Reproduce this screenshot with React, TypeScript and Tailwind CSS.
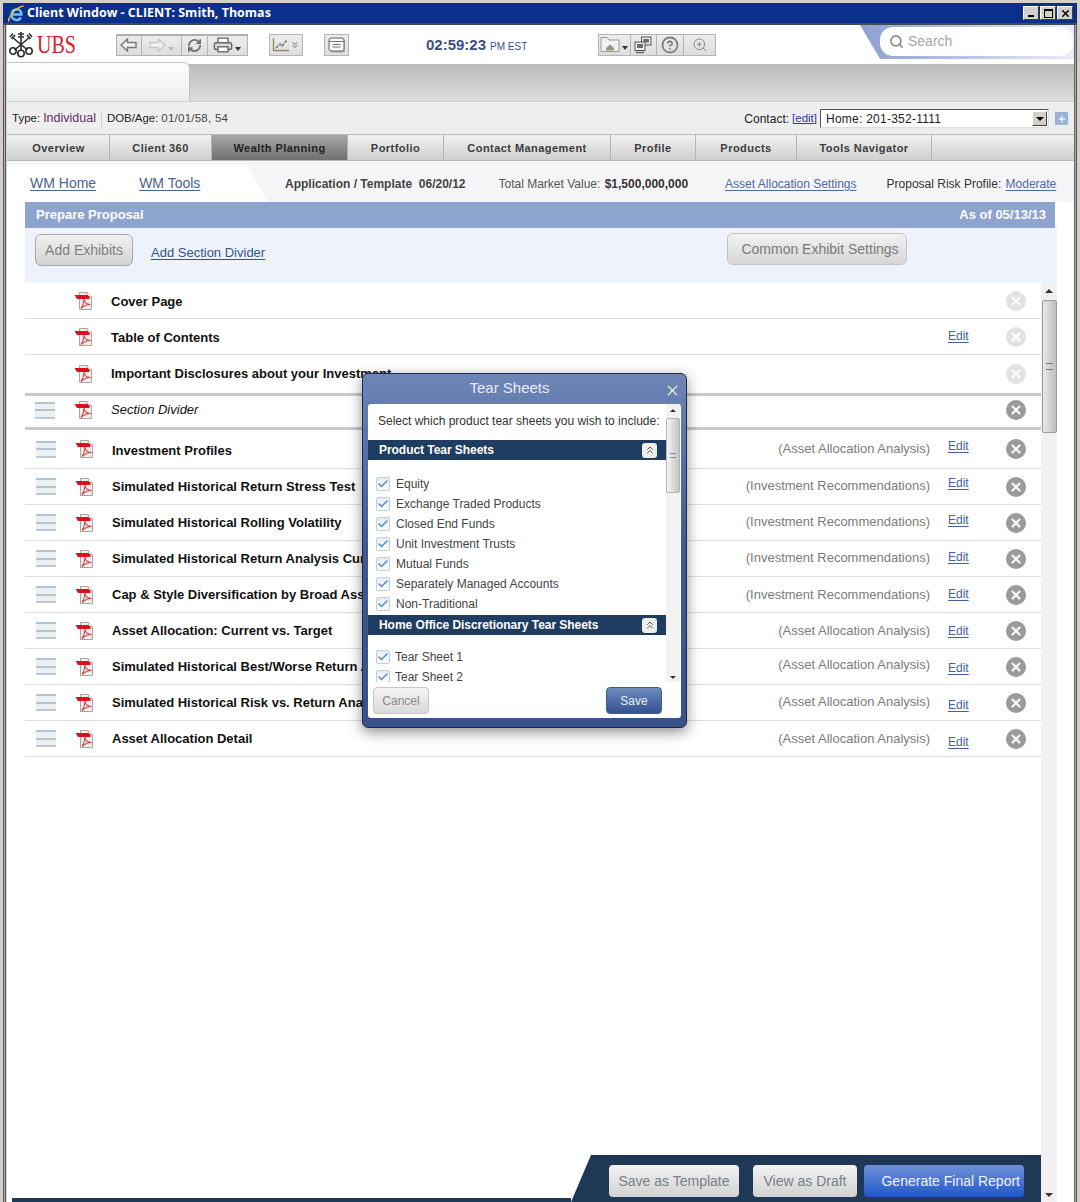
import { RefreshCw, Search, Plus, ChevronsUp, Check, X, ChevronsDown, HelpCircle, ZoomIn } from 'lucide-react'

const arial = 'font-["Liberation_Sans",Arial,sans-serif]'

const tabs = [
  { label: 'Overview', w: 'w-[102px]' },
  { label: 'Client 360', w: 'w-[102px]' },
  { label: 'Wealth Planning', w: 'w-[136px]', active: true },
  { label: 'Portfolio', w: 'w-[96px]' },
  { label: 'Contact Management', w: 'w-[167px]' },
  { label: 'Profile', w: 'w-[85px]' },
  { label: 'Products', w: 'w-[101px]' },
  { label: 'Tools Navigator', w: 'w-[135px]' },
]

type RowData = {
  name: string
  note?: string
  edit?: boolean
  drag?: boolean
  faded?: boolean
  italic?: boolean
  h: string
  thick?: boolean
  nameNudge?: string
  noteNudge?: string
  editNudge?: string
}

const rows: RowData[] = [
  { name: 'Cover Page', faded: true, h: 'h-[36px]', nameNudge: 'pt-[2px]' },
  { name: 'Table of Contents', edit: true, faded: true, h: 'h-[36px]', nameNudge: 'pt-[2px]', editNudge: 'pb-[2px]' },
  { name: 'Important Disclosures about your Investment', faded: true, h: 'h-[41px]', thick: true },
  { name: 'Section Divider', drag: true, italic: true, h: 'h-[34px] pb-[3px]', thick: true },
  { name: 'Investment Profiles', note: '(Asset Allocation Analysis)', edit: true, drag: true, h: 'h-[39px]', nameNudge: 'pt-[4px]', editNudge: 'pb-[6px]' },
  { name: 'Simulated Historical Return Stress Test', note: '(Investment Recommendations)', edit: true, drag: true, h: 'h-[36px]', noteNudge: 'pb-[2px]', editNudge: 'pb-[8px]' },
  { name: 'Simulated Historical Rolling Volatility', note: '(Investment Recommendations)', edit: true, drag: true, h: 'h-[36px]', noteNudge: 'pb-[2px]', editNudge: 'pb-[6px]' },
  { name: 'Simulated Historical Return Analysis Current vs. Target', note: '(Investment Recommendations)', edit: true, drag: true, h: 'h-[36px]', noteNudge: 'pb-[2px]', editNudge: 'pb-[4px]' },
  { name: 'Cap & Style Diversification by Broad Asset Class', note: '(Investment Recommendations)', edit: true, drag: true, h: 'h-[36px]', editNudge: 'pb-[2px]' },
  { name: 'Asset Allocation: Current vs. Target', note: '(Asset Allocation Analysis)', edit: true, drag: true, h: 'h-[36px]' },
  { name: 'Simulated Historical Best/Worse Return Analysis', note: '(Asset Allocation Analysis)', edit: true, drag: true, h: 'h-[36px]', noteNudge: 'pb-[4px]', editNudge: 'pt-[2px]' },
  { name: 'Simulated Historical Risk vs. Return Analysis', note: '(Asset Allocation Analysis)', edit: true, drag: true, h: 'h-[36px]', noteNudge: 'pb-[2px]', editNudge: 'pt-[4px]' },
  { name: 'Asset Allocation Detail', note: '(Asset Allocation Analysis)', edit: true, drag: true, h: 'h-[36px]', editNudge: 'pt-[6px]' },
]

function PdfIcon() {
  return (
    <svg width="20" height="20" viewBox="0 0 20 20" className="shrink-0">
      <path d="M5.500 1.500h8l4 4v13h-12z" fill="#efecea" stroke="#aaa5a2" />
      <path d="M13.500 1.500v4h4" fill="#fff" stroke="#bdb8b5" />
      <path d="M0.500 4h13l2 1.500v2.500H3z" fill="#d8111a" />
      <path d="M7 17.500c2-3 3-6 3-9.500 0 3 2 5 6.500 5.500-4 0-7 1.500-9.500 4z" fill="none" stroke="#d0484d" strokeWidth="1.100" />
    </svg>
  )
}

function DragHandle() {
  return (
    <div className="flex h-[17px] w-[20px] flex-col justify-between bg-[#edf0f3]">
      <div className="h-[2px] bg-[#b4c3d2]" />
      <div className="h-[2px] bg-[#b4c3d2]" />
      <div className="h-[2px] bg-[#bccad8]" />
    </div>
  )
}

function CloseDot({ faded }: { faded?: boolean }) {
  return (
    <div className={`flex size-[20px] items-center justify-center rounded-full ${faded ? 'bg-[#e2e2e2]' : 'bg-[#9a9a9a]'}`}>
      <X size={14} strokeWidth={3.4} className="text-white" />
    </div>
  )
}

function ExhibitRow({ row }: { row: RowData }) {
  return (
    <div className={`flex shrink-0 items-center ${row.h} ${row.thick ? 'border-b-[3px] border-[#c9c9c9]' : 'border-b border-[#dcdcdc]'}`}>
      <div className={`flex ${row.note ? 'w-[50px] pl-[11px]' : 'w-[49px] pl-[10px]'}`}>{row.drag && <DragHandle />}</div>
      <PdfIcon />
      <div className={`ml-[17px] w-[340px] whitespace-nowrap text-[13px] text-[#111] ${row.italic ? 'italic' : 'font-bold'} ${row.nameNudge ?? ''}`}>
        {row.name}
      </div>
      <div className={`flex-1 whitespace-nowrap pr-[18px] text-right text-[13px] text-[#7b7b7b] ${row.noteNudge ?? ''}`}>{row.note}</div>
      <div className={`w-[48px] text-[12px] ${row.editNudge ?? ''}`}>
        {row.edit && <span className="text-[#44609f] underline underline-offset-2">Edit</span>}
      </div>
      <div className="flex w-[45px] justify-start pl-[10px]">
        <CloseDot faded={row.faded} />
      </div>
    </div>
  )
}

function ToolBtn({ w, children }: { w: string; children: React.ReactNode }) {
  return (
    <div className={`flex h-full items-center justify-center gap-[2px] border-r border-[#b5b5b5] last:border-r-0 bg-gradient-to-b from-[#ececec] to-[#dedede] ${w}`}>
      {children}
    </div>
  )
}

function Caret({ light }: { light?: boolean }) {
  return <div className={`mt-[7px] h-0 w-0 border-x-[3.5px] border-t-[4px] border-x-transparent ${light ? 'border-t-[#bbb]' : 'border-t-[#333]'}`} />
}

function BlockArrow({ dir, color }: { dir: 'left' | 'right'; color: string }) {
  return (
    <svg width="17" height="14" viewBox="0 0 17 14" className={dir === 'right' ? 'scale-x-[-1]' : ''}>
      <path d="M1 7l6.500-6v3.500H16v5H7.500V13z" fill="#f0f0f0" stroke={color} strokeWidth="1.400" />
    </svg>
  )
}

function PrintIcon() {
  return (
    <svg width="20" height="18" viewBox="0 0 22 18">
      <path d="M5.500 7V1.500h11V7" fill="#fff" stroke="#666" strokeWidth="1.500" />
      <rect x="1.500" y="6.500" width="19" height="7.500" rx="2" fill="#d8d8d8" stroke="#666" strokeWidth="1.500" />
      <rect x="5.500" y="11" width="11" height="5.500" fill="#fff" stroke="#666" strokeWidth="1.500" />
    </svg>
  )
}

function ChartIcon() {
  return (
    <svg width="18" height="15" viewBox="0 0 18 15">
      <path d="M1.500 1v12.500H17" fill="none" stroke="#8a8a6a" strokeWidth="1.300" />
      <path d="M4 11l4-4 2 2 5-6" fill="none" stroke="#777" strokeWidth="1.600" strokeDasharray="3 1.200" />
    </svg>
  )
}

function WindowIcon() {
  return (
    <svg width="18" height="16" viewBox="0 0 18 16">
      <rect x="2" y="2.500" width="15" height="13" rx="2" fill="#aaa" />
      <rect x="1" y="1" width="15" height="13" rx="2" fill="#f6f6f6" stroke="#666" />
      <path d="M1 4.500h15M4.500 7.500h8M4.500 10h8" stroke="#777" />
    </svg>
  )
}

function FolderIcon() {
  return (
    <svg width="20" height="17" viewBox="0 0 20 17">
      <path d="M1 15.500V1.500h6l2 2.500h10v11.500z" fill="#f2f2f2" stroke="#999" />
      <path d="M6 12l4-3.500 4 3.500v2.500H6z" fill="#8f9a80" />
    </svg>
  )
}

function MonitorsIcon() {
  return (
    <svg width="18" height="18" viewBox="0 0 18 18">
      <rect x="7.500" y="1" width="9.500" height="8" fill="#e8e8e8" stroke="#555" />
      <rect x="9.500" y="3" width="5.500" height="3.500" fill="#6a6a6a" />
      <rect x="1" y="6" width="10" height="8.500" fill="#ededed" stroke="#555" />
      <rect x="3" y="8" width="6" height="4" fill="#6a6a6a" />
      <path d="M2 16.500h8" stroke="#666" strokeWidth="1.500" />
    </svg>
  )
}

function UbsKeys() {
  return (
    <svg width="24" height="27" viewBox="0 0 24 27" className="shrink-0">
      <g stroke="#2e2e2e" strokeWidth="1.600" fill="none">
        <path d="M12 19V1M9 3h6M9 6h6" />
        <path d="M5.500 19 21 6M18 4l3.500 4M20 2.500l3 3.500" />
        <path d="M18.500 19 3 6M6 4 2.500 8M4 2.500 1 6" />
        <circle cx="12" cy="22.500" r="3.200" />
        <circle cx="4" cy="20" r="3.200" />
        <circle cx="20" cy="20" r="3.200" />
      </g>
    </svg>
  )
}

function IeIcon() {
  return (
    <svg width="18" height="18" viewBox="0 0 18 18" className="shrink-0">
      <path d="M4.500 9.500h10c0-7-9-7-10 0 0 6 7 7 9.500 3" fill="none" stroke="#6fc0f0" strokeWidth="2.400" />
      <path d="M1.500 16.500C0 13 9 3 16.500 1c-4 0-13 5-15 15.500z" fill="#eebb33" stroke="#eebb33" />
    </svg>
  )
}

function WinBtn({ children }: { children: React.ReactNode }) {
  return (
    <div className="flex h-[14px] w-[16px] items-center justify-center border border-t-white border-l-white border-r-[#404040] border-b-[#404040] bg-[#d4d0c8]">
      {children}
    </div>
  )
}

function TickBox() {
  return (
    <div className="flex size-[14px] shrink-0 items-center justify-center rounded-[2px] border border-[#c4ccd6] bg-gradient-to-b from-[#e9edf2] to-[#fbfcfd]">
      <Check size={12} strokeWidth={3} className="text-[#4f8fc9]" />
    </div>
  )
}

function SheetHeader({ title }: { title: string }) {
  return (
    <div className="flex h-[20px] shrink-0 items-center justify-between bg-[#1f3d61] pl-[11px] pr-[9px] text-[12px] font-bold tracking-[-0.05px] text-white">
      <span>{title}</span>
      <div className="flex size-[15px] items-center justify-center rounded-[3px] bg-[#eeeeea]">
        <ChevronsUp size={12} strokeWidth={2} className="text-[#55584f]" />
      </div>
    </div>
  )
}

function TearSheetsModal() {
  const products = ['Equity', 'Exchange Traded Products', 'Closed End Funds', 'Unit Investment Trusts', 'Mutual Funds', 'Separately Managed Accounts', 'Non-Traditional']
  return (
    <div className={`absolute left-[362px] top-[373px] h-[355px] w-[325px] rounded-[6px] border border-[#1c2c4c] bg-gradient-to-b from-[#6d86b6] via-[#3d5a94] to-[#3a5189] px-[5px] shadow-[0_4px_14px_rgba(0,0,0,0.45)] ${arial}`}>
      <div className="relative flex h-[30px] items-center justify-center pb-[2px] pr-[30px] text-[15px] text-[#e8edf6]">
        <span>Tear Sheets</span>
        <X size={17} strokeWidth={1.6} className="absolute right-[0px] top-[8px] text-white" />
      </div>
      <div className="flex h-[314px] flex-col rounded-[3px] bg-white">
        <div className="flex h-[278px] shrink-0">
          <div className="flex w-[298px] flex-col overflow-hidden">
            <div className="flex h-[36px] shrink-0 items-center pb-[2px] pl-[10px] text-[12px] text-[#333]">
              Select which product tear sheets you wish to include:
            </div>
            <SheetHeader title="Product Tear Sheets" />
            <div className="flex h-[155px] shrink-0 flex-col gap-[6px] pl-[8px] pt-[17px]">
              {products.map((p) => (
                <div key={p} className="flex h-[14px] items-center gap-[6px] text-[12px] text-[#444]">
                  <TickBox />
                  {p}
                </div>
              ))}
            </div>
            <SheetHeader title="Home Office Discretionary Tear Sheets" />
            <div className="flex flex-col gap-[6px] pl-[8px] pt-[15px]">
              {['Tear Sheet 1', 'Tear Sheet 2'].map((p) => (
                <div key={p} className="flex h-[14px] items-center gap-[5px] text-[12px] text-[#444]">
                  <TickBox />
                  {p}
                </div>
              ))}
            </div>
          </div>
          <div className="flex w-[14px] flex-col items-center bg-[#f3f3f3]">
            <div className="mt-[5px] h-0 w-0 border-x-[3px] border-b-[3px] border-x-transparent border-b-[#333]" />
            <div className="mt-[6px] flex h-[75px] w-full items-center justify-center rounded-[2px] border border-[#b4b4b4] bg-gradient-to-r from-[#f5f5f5] to-[#c4c4c4]">
              <div className="h-[5px] w-[6px] border-y border-[#888]" />
            </div>
            <div className="mb-[3px] mt-auto h-0 w-0 border-x-[3px] border-t-[3px] border-x-transparent border-t-[#333]" />
          </div>
        </div>
        <div className="flex flex-1 items-start justify-between pl-[5px] pr-[19px] pt-[5px] text-[12px]">
          <div className="flex h-[27px] w-[56px] items-center justify-center rounded-[4px] border border-[#c6c6c6] bg-gradient-to-b from-[#f5f5f5] to-[#d9d9d9] text-[#8a8a8a]">Cancel</div>
          <div className="flex h-[27px] w-[56px] items-center justify-center rounded-[4px] border border-[#3a5a92] bg-gradient-to-b from-[#6f8cc0] to-[#34528f] text-[#e8edf6]">Save</div>
        </div>
      </div>
    </div>
  )
}

export default function App() {
  return (
    <div className={`relative flex h-[1202px] w-[1080px] flex-col overflow-hidden bg-[#d4d0c8] pt-[3px] ${arial}`}>
      {/* title bar */}
      <div className="mx-[3px] flex h-[20px] shrink-0 items-center justify-between bg-[#0a2f8c] pl-[4px] pr-[4px] text-white">
        <div className="flex items-center gap-[2px] pt-[1px] font-['Open_Sans',sans-serif] text-[12.500px] font-bold">
          <IeIcon />
          Client Window - CLIENT: Smith, Thomas
        </div>
        <div className="flex items-center gap-[1px]">
          <WinBtn><div className="mt-[6px] h-[2px] w-[6px] bg-black" /></WinBtn>
          <WinBtn><div className="size-[9px] border border-t-2 border-black" /></WinBtn>
          <WinBtn><X size={11} strokeWidth={3} className="text-black" /></WinBtn>
        </div>
      </div>

      <div className="mx-[3px] flex min-h-0 flex-1 border-t-[2px] border-[#4a4a4a] bg-white pl-[4px] pr-[3px] shadow-[inset_1px_0_#555,inset_2px_0_#b4b4b4,inset_3px_0_#555,inset_4px_0_#d9d9e4,inset_-1px_0_#555,inset_-2px_0_#a8a8a8,inset_-3px_0_#666]">
        <div className="flex min-w-0 flex-1 flex-col">
          {/* header */}
          <div className="flex h-[40px] shrink-0 items-center border-b border-[#b8b8b8] pl-[2px]">
            <div className="flex w-[73px] items-center gap-[4px]">
              <UbsKeys />
              <span className="origin-left scale-x-[0.8] font-['Liberation_Serif',serif] text-[25px] leading-none text-[#d5202a]">UBS</span>
            </div>
            <div className="ml-[34px] flex h-[22px] w-[132px] border border-t-2 border-[#b0b0b0]">
              <ToolBtn w="w-[25px]"><BlockArrow dir="left" color="#777" /></ToolBtn>
              <ToolBtn w="w-[41px]"><BlockArrow dir="right" color="#c8c8c8" /><Caret light /></ToolBtn>
              <ToolBtn w="w-[26px]"><RefreshCw size={15} strokeWidth={2.8} className="text-[#6e6e6e]" /></ToolBtn>
              <ToolBtn w="w-[40px]"><PrintIcon /><Caret /></ToolBtn>
            </div>
            <div className="ml-[21px] flex h-[22px] w-[34px] items-center justify-center border border-[#b5b5b5] bg-gradient-to-b from-[#ececec] to-[#dedede]">
              <ChartIcon />
              <ChevronsDown size={10} className="text-[#555]" />
            </div>
            <div className="ml-[21px] flex h-[22px] w-[25px] items-center justify-center border border-[#b5b5b5] bg-gradient-to-b from-[#ececec] to-[#dedede]">
              <WindowIcon />
            </div>
            <div className="ml-[77px] w-[172px] whitespace-nowrap text-[#3c4f85]">
              <span className="text-[15px] font-bold">02:59:23</span>
              <span className="ml-[4px] text-[10px]">PM EST</span>
            </div>
            <div className="flex h-[22px] w-[118px] border border-[#b5b5b5]">
              <ToolBtn w="w-[32px]"><FolderIcon /><Caret /></ToolBtn>
              <ToolBtn w="w-[26px]"><MonitorsIcon /></ToolBtn>
              <ToolBtn w="w-[28px]"><HelpCircle size={18} strokeWidth={2.4} className="text-[#7e7e7e]" /></ToolBtn>
              <ToolBtn w="w-[31px]"><ZoomIn size={16} strokeWidth={1.5} className="text-[#8a8a8a]" /></ToolBtn>
            </div>
            <div className="ml-[144px] flex h-[34px] w-[214px] items-end self-start bg-gradient-to-r from-[#8ea0d2] via-[#b9c6ea] to-[#e8edf8] [clip-path:polygon(0_0,100%_0,100%_100%,20px_100%)]">
              <div className="mb-[3px] ml-[20px] flex h-[29px] w-[193px] items-center gap-[4px] rounded-[13px] bg-white pl-[9px] text-[14px] text-[#a5a5a5]">
                <Search size={15} strokeWidth={2.6} className="text-[#8a8a8a]" />
                Search
              </div>
            </div>
          </div>

          {/* empty tab strip */}
          <div className="flex h-[36px] shrink-0 bg-gradient-to-b from-[#bdbdbd] to-[#dcdcdc]">
            <div className="-mt-[3px] h-[39px] w-[183px] rounded-tr-[6px] border-t border-r border-[#c4c4c4] bg-gradient-to-b from-white to-[#ececec]" />
          </div>

          {/* client info */}
          <div className="flex h-[33px] shrink-0 items-center border-t border-[#cfcfcf] bg-[#eeeeee] pl-[5px] pr-[6px] pt-[1px] text-[11.500px] text-[#444]">
            <span className="text-[#222]">Type:</span>
            <span className="ml-[3px] text-[12.500px] text-[#603060]">Individual</span>
            <div className="mx-[5px] h-[16px] w-px bg-[#ccc]" />
            <span className="text-[11.400px] text-[#222]">DOB/Age:</span>
            <span className="ml-[3px] tracking-[0.25px]">01/01/58, 54</span>
            <span className="ml-auto text-[12px] text-[#222]">Contact:</span>
            <span className="ml-[3px] text-[#2a3fa0] underline">[edit]</span>
            <div className="ml-[3px] flex h-[19px] w-[229px] items-center justify-between border border-t-[#555] border-l-[#555] border-r-[#ddd] border-b-[#ddd] bg-white pl-[5px] pr-[1px] text-[12px] tracking-[0.25px] text-[#222]">
              Home: 201-352-1111
              <div className="flex h-[15px] w-[15px] items-center justify-center border border-t-white border-l-white border-r-[#444] border-b-[#444] bg-[#d4d0c8]">
                <div className="h-0 w-0 border-x-[4px] border-t-[4px] border-x-transparent border-t-black" />
              </div>
            </div>
            <div className="ml-[6px] flex size-[13px] items-center justify-center bg-[#9bb3d8]">
              <Plus size={10} strokeWidth={3} className="text-white" />
            </div>
          </div>

          {/* main nav */}
          <div className="flex h-[27px] shrink-0 border-y border-[#b9b9b9] bg-gradient-to-b from-[#f2f2f2] to-[#cfcfcf] pl-px text-[11px] font-bold tracking-[0.45px] text-[#3c3c3c]">
            {tabs.map((t) => (
              <div
                key={t.label}
                className={`flex items-center justify-center border-r border-[#b4b4b4] pt-[2px] ${t.w} ${t.active ? 'bg-gradient-to-b from-[#a9a9a9] to-[#6f6f6f] text-[#222]' : ''}`}
              >
                {t.label}
              </div>
            ))}
          </div>

          {/* sub nav */}
          <div className="flex h-[41px] shrink-0 items-center bg-[#f5f5f7] text-[12px]">
            <div className="mt-[4px] flex h-[37px] w-[261px] items-center gap-[43px] bg-white pl-[23px] text-[14px] text-[#4b6292] [clip-path:polygon(0_0,240px_0,100%_100%,0_100%)]">
              <span className="underline underline-offset-2">WM Home</span>
              <span className="underline underline-offset-2">WM Tools</span>
            </div>
            <div className="ml-[17px] whitespace-nowrap pt-[4px] font-bold text-[#444]">Application / Template&nbsp; 06/20/12</div>
            <div className="ml-[33px] whitespace-nowrap pt-[4px] text-[#555]">
              Total Market Value: <span className="ml-[1px] font-bold text-[#333]">$1,500,000,000</span>
            </div>
            <div className="ml-[37px] whitespace-nowrap pt-[4px] text-[#4b6aa8] underline underline-offset-2">Asset Allocation Settings</div>
            <div className="ml-[30px] whitespace-nowrap pt-[4px] text-[#333]">
              Proposal Risk Profile: <span className="ml-[1px] text-[#4b6aa8] underline underline-offset-2">Moderate</span>
            </div>
          </div>

          {/* proposal */}
          <div className="flex min-h-0 flex-1 flex-col pl-[18px]">
            <div className="flex h-[26px] w-[1030px] shrink-0 items-center justify-between bg-[#8da4cf] pl-[11px] pr-[9px] text-[13px] font-bold text-white">
              <span>Prepare Proposal</span>
              <span>As of 05/13/13</span>
            </div>
            <div className="flex h-[55px] w-[1032px] shrink-0 items-start bg-[#eef2fb] pl-[10px] pt-[6px]">
              <div className="flex h-[32px] w-[98px] items-center justify-center rounded-[6px] border border-[#a9a9a9] bg-gradient-to-b from-[#f1f1f1] to-[#d3d3d3] text-[14px] text-[#7f7f7f]">Add Exhibits</div>
              <span className="ml-[18px] mt-[9px] w-[114px] whitespace-nowrap text-[13px] font-medium text-[#33528f] underline underline-offset-2">Add Section Divider</span>
              <div className="-mt-[1px] ml-[462px] flex h-[32px] w-[180px] items-center justify-center rounded-[6px] border border-[#c4c4c4] bg-gradient-to-b from-[#f2f2f2] to-[#d6d6d6] pl-[6px] text-[14px] text-[#7a7a7a]">Common Exhibit Settings</div>
            </div>
            <div className="flex min-h-0 flex-1">
              <div className="flex w-[1016px] flex-col">
                {rows.map((r) => (
                  <ExhibitRow key={r.name} row={r} />
                ))}
                <div className="-ml-[13px] mt-auto flex h-[47px] shrink-0 items-start">
                  <div className="mt-[43px] h-[4px] w-[559px] bg-[#1e3856]" />
                  <div className="flex h-[47px] flex-1 items-start gap-[14px] bg-[#1e3856] pl-[38px] pt-[10px] text-[14px] [clip-path:polygon(20px_0,100%_0,100%_100%,0_100%)]">
                    <div className="flex h-[32px] w-[130px] items-center justify-center rounded-[4px] bg-gradient-to-b from-[#f2f2f2] to-[#d2d2d2] text-[#7a7f88]">Save as Template</div>
                    <div className="flex h-[32px] w-[104px] items-center justify-center rounded-[4px] bg-gradient-to-b from-[#f2f2f2] to-[#d2d2d2] text-[#7a7f88]">View as Draft</div>
                    <div className="-ml-[7px] flex h-[32px] w-[160px] items-center justify-end rounded-[4px] bg-gradient-to-b from-[#6f90d8] to-[#1f56c8] pr-[4px] text-[#f0f4ff]">Generate Final Report</div>
                  </div>
                </div>
              </div>
              <div className="flex w-[16px] flex-col items-center bg-[#f1f1f1]">
                <div className="mt-[6px] h-0 w-0 border-x-[4px] border-b-[4px] border-x-transparent border-b-[#333]" />
                <div className="mt-[7px] flex h-[133px] w-[15px] items-center justify-center rounded-[2px] border border-[#9a9a9a] bg-gradient-to-r from-[#e9e9e9] to-[#bdbdbd]">
                  <div className="h-[7px] w-[7px] border-y border-[#777]" />
                </div>
                <div className="mb-[5px] mt-auto h-0 w-0 border-x-[4px] border-t-[4px] border-x-transparent border-t-[#333]" />
              </div>
            </div>
          </div>
        </div>
      </div>
      <TearSheetsModal />
    </div>
  )
}
